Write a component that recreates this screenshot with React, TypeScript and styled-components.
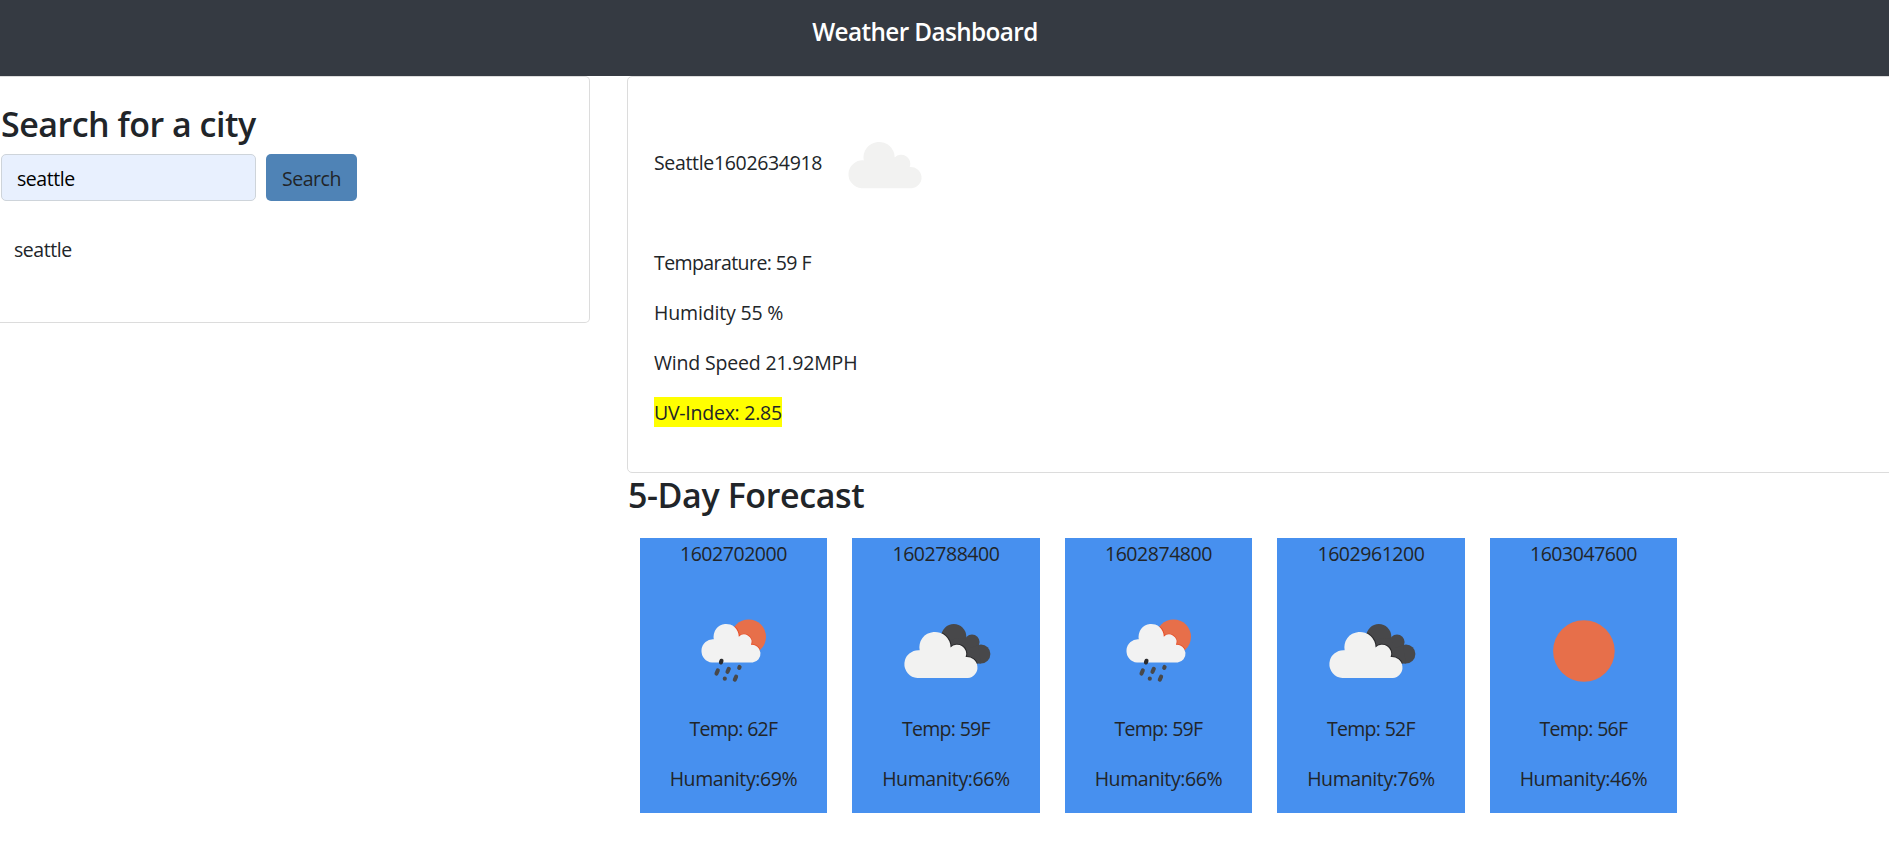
import React from "react";
import styled, { createGlobalStyle } from "styled-components";

const GlobalStyle = createGlobalStyle`
  *, *::before, *::after { box-sizing: border-box; }
  body {
    margin: 0;
    background: #fff;
    color: #212529;
    font-family: "Segoe UI", "Open Sans", "Noto Sans", sans-serif;
    font-size: 19.5px;
    line-height: 30px;
    overflow: hidden;
  }
  p, h2, h3, ul { margin: 0; padding: 0; font-weight: inherit; }
`;

const Page = styled.div`
  width: 100%;
  height: 866px;
  overflow: hidden;
`;

const Header = styled.header`
  height: 76px;
  padding: 17px 39px 0 0;
  background: #353a42;
  color: #fff;
  text-align: center;
`;

const Title = styled.h2`
  font-size: 24.3px;
  font-weight: 600;
  line-height: 30px;
  letter-spacing: -0.6px;
`;

const Columns = styled.main`
  display: flex;
  align-items: flex-start;
  gap: 37px;
`;

const SearchPanel = styled.section`
  flex: 0 0 590px;
  height: 247px;
  padding: 26px 0 0 1px;
  border: 1px solid #dcdcdc;
  border-left: 0;
  border-radius: 0 5px 5px 0;
`;

const Heading = styled.h3<{ $spacing: string }>`
  font-size: 34px;
  font-weight: 600;
  line-height: 42px;
  letter-spacing: ${(p) => p.$spacing};
`;

const SearchForm = styled.form`
  display: flex;
  gap: 10px;
  margin-top: 9px;
`;

const CityInput = styled.input`
  width: 255px;
  height: 47px;
  padding: 2px 15px 0;
  border: 1px solid #ced4da;
  border-radius: 5px;
  background: #e8f0fe;
  color: #000;
  font: inherit;
  letter-spacing: -0.45px;
  outline: none;
`;

const SearchButton = styled.button`
  width: 91px;
  height: 47px;
  padding: 2px 0 0;
  border: 0;
  border-radius: 5px;
  background: #4f83b6;
  color: #212529;
  font: inherit;
  letter-spacing: -0.45px;
`;

const History = styled.ul`
  padding: 34px 0 0 13px;
  list-style: none;
  letter-spacing: -0.45px;
`;

const Results = styled.div`
  flex: 0 0 1290px;
`;

const CurrentPanel = styled.section`
  display: flex;
  flex-direction: column;
  align-items: flex-start;
  gap: 20px;
  height: 397px;
  padding: 21px 26px;
  border: 1px solid #dcdcdc;
  border-radius: 5px;
`;

const Reading = styled.p<{ $alert?: boolean; $spacing: string }>`
  padding-top: 2px;
  line-height: 28px;
  background: ${(p) => (p.$alert ? "#ffff00" : "transparent")};
  letter-spacing: ${(p) => p.$spacing};
`;

const CityLine = styled.div`
  display: flex;
  align-items: center;
  height: 129px;

  ${Reading} {
    padding-top: 0;
  }
`;

const Forecast = styled.section`
  padding: 1px 0 0 1px;
`;

const ForecastRow = styled.div`
  display: flex;
  gap: 25px;
  padding: 22px 0 0 11.7px;
`;

const DayCard = styled.article`
  display: flex;
  flex-direction: column;
  align-items: center;
  width: 187.5px;
  height: 275px;
  background: #4790ef;
`;

const DayText = styled.p<{ $spacing: string }>`
  margin-bottom: 20px;
  padding-top: 2px;
  line-height: 28px;
  letter-spacing: ${(p) => p.$spacing};
`;

const Icon = styled.svg`
  display: block;
  width: 125px;
  height: 125px;
  flex: none;
`;

const CLOUD =
  "M13.9 46.1A13.9 13.9 0 0 1 16.1 18.3A15.4 15.4 0 1 1 46.6 15.4A9 9 0 0 1 61.4 25A10.6 10.6 0 1 1 63.5 46.1Z";

type Sky = "cloud" | "broken" | "rain" | "clear";

function WeatherIcon({ sky }: { sky: Sky }) {
  const id = React.useId();
  if (sky === "clear") {
    return (
      <Icon viewBox="0 0 125 125">
        <circle cx="62.9" cy="63" r="30.8" fill="#e76f4a" />
      </Icon>
    );
  }
  if (sky === "cloud") {
    return (
      <Icon viewBox="0 0 125 125">
        <path d={CLOUD} transform="translate(25.4 42.1) scale(1.015 1)" fill="#f2f2f1" />
      </Icon>
    );
  }
  if (sky === "broken") {
    const back = (
      <>
        <circle cx="70.8" cy="48.5" r="12.5" />
        <circle cx="89" cy="54" r="7.6" />
        <circle cx="98" cy="66" r="9.4" />
        <path d="M60 52L82 50L88 60L95 57.3L98 75.4H76Z" />
      </>
    );
    return (
      <Icon viewBox="0 0 125 125">
        <clipPath id={id}>{back}</clipPath>
        <g fill="#48484a">{back}</g>
        <g clipPath={`url(#${id})`}>
          <path d={CLOUD} transform="translate(20.3 44) scale(1.015 1)" stroke="#2b2b2d" strokeWidth="2" />
        </g>
        <path d={CLOUD} transform="translate(20.3 44) scale(1.015 1)" fill="#f2f2f1" />
      </Icon>
    );
  }
  return (
    <Icon viewBox="0 0 125 125">
      <clipPath id={id}>
        <circle cx="77.6" cy="48.8" r="17.4" />
      </clipPath>
      <circle cx="77.6" cy="48.8" r="17.4" fill="#e76f4a" />
      <g clipPath={`url(#${id})`}>
        <path d={CLOUD} transform="translate(29.6 36) scale(.82 .835)" stroke="#e8502a" strokeWidth="2.2" />
      </g>
      <path d={CLOUD} transform="translate(29.6 36) scale(.82 .835)" fill="#f2f2f2" />
      <g stroke="#48484a" strokeWidth="4.1" strokeLinecap="round">
        <path d="M50.5 72.8L49.9 74.5" stroke="#2b2b2d" />
        <path d="M46.8 82.5L45.5 85.5" />
        <path d="M57.8 80.8L56.5 83.8" />
        <path d="M68.6 79L68.2 79.8" />
        <path d="M53.8 90.5L53.8 90.8" />
        <path d="M65.1 88.7L63.8 91.7" />
      </g>
    </Icon>
  );
}

const days: { date: string; sky: Sky; temp: number; humidity: number }[] = [
  { date: "1602702000", sky: "rain", temp: 62, humidity: 69 },
  { date: "1602788400", sky: "broken", temp: 59, humidity: 66 },
  { date: "1602874800", sky: "rain", temp: 59, humidity: 66 },
  { date: "1602961200", sky: "broken", temp: 52, humidity: 76 },
  { date: "1603047600", sky: "clear", temp: 56, humidity: 46 },
];

export default function App() {
  return (
    <Page>
      <GlobalStyle />
      <Header>
        <Title>Weather Dashboard</Title>
      </Header>
      <Columns>
        <SearchPanel>
          <Heading $spacing="-0.5px">Search for a city</Heading>
          <SearchForm onSubmit={(e) => e.preventDefault()}>
            <CityInput defaultValue="seattle" spellCheck={false} />
            <SearchButton type="submit">Search</SearchButton>
          </SearchForm>
          <History>
            <li>seattle</li>
          </History>
        </SearchPanel>
        <Results>
          <CurrentPanel>
            <CityLine>
              <Reading $spacing="-0.33px">Seattle1602634918</Reading>
              <WeatherIcon sky="cloud" />
            </CityLine>
            <Reading $spacing="-0.58px">Temparature: 59 F</Reading>
            <Reading $spacing="-0.17px">Humidity 55 %</Reading>
            <Reading $spacing="-0.18px">Wind Speed 21.92MPH</Reading>
            <Reading $alert $spacing="-0.25px">UV-Index: 2.85</Reading>
          </CurrentPanel>
          <Forecast>
            <Heading $spacing="-0.4px">5-Day Forecast</Heading>
            <ForecastRow>
              {days.map((day) => (
                <DayCard key={day.date}>
                  <DayText $spacing="-0.45px">{day.date}</DayText>
                  <WeatherIcon sky={day.sky} />
                  <DayText $spacing="-0.7px">Temp: {day.temp}F</DayText>
                  <DayText $spacing="-0.4px">Humanity:{day.humidity}%</DayText>
                </DayCard>
              ))}
            </ForecastRow>
          </Forecast>
        </Results>
      </Columns>
    </Page>
  );
}
